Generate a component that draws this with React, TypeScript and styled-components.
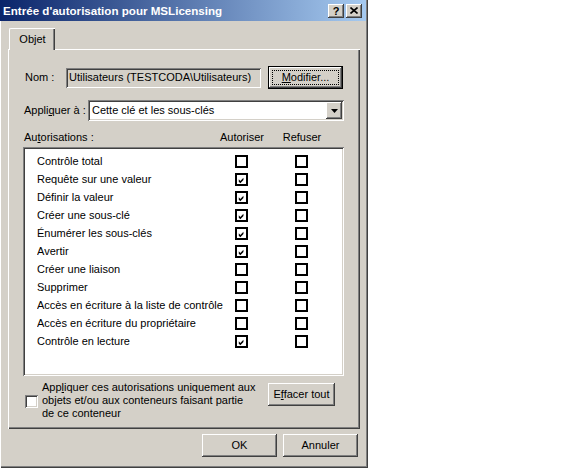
import React from 'react';
import styled, { createGlobalStyle } from 'styled-components';

const FACE = '#d4d0c8';
const SHADOW = '#808080';
const DARK = '#404040';

const raised = `inset -1px -1px ${DARK}, inset 1px 1px #fff, inset -2px -2px ${SHADOW}, inset 2px 2px ${FACE}`;
const sunken = `inset 1px 1px ${SHADOW}, inset -1px -1px #fff, inset 2px 2px ${DARK}, inset -2px -2px ${FACE}`;

const GlobalStyle = createGlobalStyle`
  html, body {
    margin: 0;
    padding: 0;
    background: #fff;
  }
  body {
    font-family: 'Liberation Sans', Arial, sans-serif;
    font-size: 11px;
    line-height: 13px;
    color: #000;
  }
`;

const Window = styled.div`
  width: 368px;
  height: 468px;
  box-sizing: border-box;
  padding: 0 2px 2px 0;
  background: ${FACE};
  box-shadow: inset 1px 0 #fff, inset -1px -1px ${DARK}, inset -2px -2px ${SHADOW};
  display: flex;
  flex-direction: column;
`;

const TitleBar = styled.div`
  height: 21px;
  flex-shrink: 0;
  display: flex;
  align-items: center;
  gap: 2px;
  padding: 0 4px 0 3px;
  background: linear-gradient(to right, #0a246a, #a6caf0);
  color: #fff;
  font-weight: bold;
`;

const Title = styled.span`
  flex: 1;
  font-size: 11.6px;
  white-space: nowrap;
`;

const CaptionButton = styled.div`
  width: 16px;
  height: 14px;
  box-sizing: border-box;
  background: ${FACE};
  box-shadow: ${raised};
  color: #000;
  font-size: 11px;
  line-height: 14px;
  display: flex;
  align-items: center;
  justify-content: center;
`;

const Body = styled.div`
  flex: 1;
  display: flex;
  flex-direction: column;
  padding: 7px 6px 0 8px;
`;

const TabRow = styled.div`
  display: flex;
  padding-left: 1px;
`;

const Tab = styled.div`
  position: relative;
  z-index: 1;
  width: 46px;
  height: 22px;
  margin-bottom: -1px;
  box-sizing: border-box;
  padding-top: 4px;
  text-align: center;
  background: ${FACE};
  border-top: 1px solid #fff;
  border-left: 1px solid #fff;
  border-top-left-radius: 2px;
  box-shadow: inset -1px 0 ${DARK}, inset -2px 0 ${SHADOW};
`;

const Panel = styled.div`
  height: 380px;
  box-sizing: border-box;
  padding: 16px 16px 0 14px;
  border-top: 1px solid #fff;
  border-left: 1px solid #fff;
  box-shadow: inset -1px -1px ${DARK}, inset -2px -2px ${SHADOW};
  display: flex;
  flex-direction: column;
`;

const FieldRow = styled.div<{ $gap?: number; $height: number }>`
  display: flex;
  align-items: center;
  height: ${(p) => p.$height}px;
  margin-top: ${(p) => p.$gap ?? 0}px;
`;

const Label = styled.span<{ $width: number; $indent: number }>`
  width: ${(p) => p.$width}px;
  padding-left: ${(p) => p.$indent}px;
  box-sizing: border-box;
  white-space: nowrap;
`;

const ReadOnlyField = styled.div`
  width: 195px;
  height: 20px;
  box-sizing: border-box;
  padding: 3px 0 0 3px;
  background: ${FACE};
  box-shadow: ${sunken};
  white-space: nowrap;
  overflow: hidden;
`;

const Button = styled.div<{ $width: number; $default?: boolean }>`
  position: relative;
  width: ${(p) => p.$width}px;
  height: 23px;
  box-sizing: border-box;
  flex-shrink: 0;
  display: flex;
  align-items: center;
  justify-content: center;
  background: ${FACE};
  box-shadow: ${raised};
  border: ${(p) => (p.$default ? '1px solid #000' : 'none')};
  &::after {
    content: '';
    display: ${(p) => (p.$default ? 'block' : 'none')};
    position: absolute;
    inset: 3px;
    border: 1px dotted #000;
  }
`;

const Combo = styled.div`
  flex: 1;
  height: 21px;
  box-sizing: border-box;
  padding: 2px;
  background: #fff;
  box-shadow: ${sunken};
  display: flex;
  align-items: center;
`;

const ComboText = styled.span`
  flex: 1;
  padding-left: 2px;
`;

const DropButton = styled.div`
  width: 16px;
  height: 17px;
  background: ${FACE};
  box-shadow: ${raised};
  display: flex;
  align-items: center;
  justify-content: center;
`;

const HeaderRow = styled.div`
  display: flex;
  height: 13px;
  margin-top: 10px;
  padding-right: 12px;
`;

const HeaderLabel = styled.span`
  flex: 1;
  padding-left: 1px;
`;

const HeaderColumn = styled.span`
  width: 60px;
  text-align: center;
`;

const PermissionList = styled.div`
  height: 229px;
  margin-top: 3px;
  box-sizing: border-box;
  padding: 5px 2px 2px;
  background: #fff;
  box-shadow: ${sunken};
`;

const PermissionRow = styled.div`
  display: flex;
  align-items: center;
  height: 18px;
  padding-left: 12px;
`;

const PermissionName = styled.span`
  width: 189px;
  overflow: hidden;
  white-space: nowrap;
`;

const FlatCheck = styled.div<{ $offset: number }>`
  width: 13px;
  height: 13px;
  box-sizing: border-box;
  margin-left: ${(p) => p.$offset}px;
  border: 1px solid #000;
  box-shadow: inset 0 0 0 1px #000;
  background: #fff;
  display: flex;
  padding: 2px;
`;

const BottomRow = styled.div`
  display: flex;
  margin-top: 5px;
`;

const SunkenCheck = styled.div`
  width: 13px;
  height: 13px;
  flex-shrink: 0;
  margin: 14px 0 0 2px;
  background: #fff;
  box-shadow: ${sunken};
`;

const OptionText = styled.div`
  margin-left: 4px;
  white-space: nowrap;
`;

const SideButton = styled(Button)`
  margin: 2px 9px 0 auto;
`;

const Footer = styled.div`
  display: flex;
  justify-content: flex-end;
  gap: 6px;
  margin-top: 5px;
  padding-right: 2px;
`;

const CheckMark = () => (
  <svg width="9" height="9" viewBox="0 0 9 9">
    <polygon points="1,3 3,5 7,1 7,4 3,8 1,6" fill="#000" />
  </svg>
);

const PERMISSIONS: { name: string; allow: boolean }[] = [
  { name: 'Contrôle total', allow: false },
  { name: 'Requête sur une valeur', allow: true },
  { name: 'Définir la valeur', allow: true },
  { name: 'Créer une sous-clé', allow: true },
  { name: 'Énumérer les sous-clés', allow: true },
  { name: 'Avertir', allow: true },
  { name: 'Créer une liaison', allow: false },
  { name: 'Supprimer', allow: false },
  { name: 'Accès en écriture à la liste de contrôle d\u2019accès', allow: false },
  { name: 'Accès en écriture du propriétaire', allow: false },
  { name: 'Contrôle en lecture', allow: true },
];

const App: React.FC = () => (
  <>
    <GlobalStyle />
    <Window>
      <TitleBar>
        <Title>Entrée d'autorisation pour MSLicensing</Title>
        <CaptionButton>?</CaptionButton>
        <CaptionButton>
          <svg width="8" height="7" viewBox="0 0 8 7">
            <path d="M0.5 0.5 L7.5 6.5 M7.5 0.5 L0.5 6.5" stroke="#000" strokeWidth="1.6" />
          </svg>
        </CaptionButton>
      </TitleBar>
      <Body>
        <TabRow>
          <Tab>Objet</Tab>
        </TabRow>
        <Panel>
          <FieldRow $height={23}>
            <Label $width={43} $indent={2}>Nom :</Label>
            <ReadOnlyField>Utilisateurs (TESTCODA\Utilisateurs)</ReadOnlyField>
            <Button $width={75} $default style={{ marginLeft: 7 }}>
              <span><u>M</u>odifier...</span>
            </Button>
          </FieldRow>
          <FieldRow $height={21} $gap={11}>
            <Label $width={65} $indent={1}>Appli<u>q</u>uer à :</Label>
            <Combo>
              <ComboText>Cette clé et les sous-clés</ComboText>
              <DropButton>
                <svg width="7" height="4" viewBox="0 0 7 4">
                  <polygon points="0,0 7,0 3.5,4" fill="#000" />
                </svg>
              </DropButton>
            </Combo>
          </FieldRow>
          <HeaderRow>
            <HeaderLabel>Au<u>t</u>orisations :</HeaderLabel>
            <HeaderColumn>Autoriser</HeaderColumn>
            <HeaderColumn>Refuser</HeaderColumn>
          </HeaderRow>
          <PermissionList>
            {PERMISSIONS.map((p) => (
              <PermissionRow key={p.name}>
                <PermissionName>{p.name}</PermissionName>
                <FlatCheck $offset={9}>{p.allow && <CheckMark />}</FlatCheck>
                <FlatCheck $offset={47} />
              </PermissionRow>
            ))}
          </PermissionList>
          <BottomRow>
            <SunkenCheck />
            <OptionText>
              App<u>l</u>iquer ces autorisations uniquement aux
              <br />
              objets et/ou aux conteneurs faisant partie
              <br />
              de ce conteneur
            </OptionText>
            <SideButton $width={67}>
              <span>E<u>f</u>facer tout</span>
            </SideButton>
          </BottomRow>
        </Panel>
        <Footer>
          <Button $width={75}>OK</Button>
          <Button $width={75}>Annuler</Button>
        </Footer>
      </Body>
    </Window>
  </>
);

export default App;
